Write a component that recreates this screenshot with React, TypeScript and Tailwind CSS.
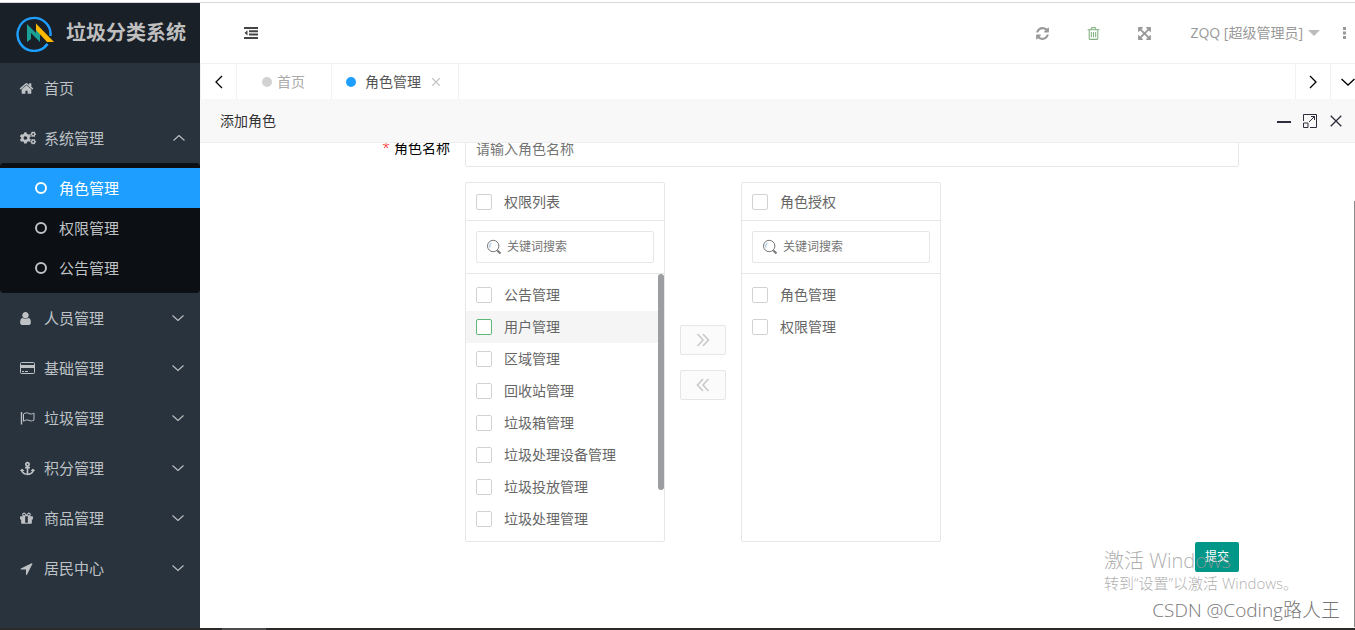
import type { ReactNode } from 'react';
import { FaAnchor, FaCogs } from 'react-icons/fa';

const faPaths = {
  home: 'M1472 992v480q0 26-19 45t-45 19h-384v-384h-256v384h-384q-26 0-45-19t-19-45v-480q0-1 .5-3t.5-3l575-474 575 474q1 2 1 6zm223-69l-62 74q-8 9-21 11h-3q-13 0-21-7l-692-577-692 577q-12 8-24 7-13-2-21-11l-62-74q-8-10-7-23.5t11-21.5l719-599q32-26 76-26t76 26l244 204v-195q0-14 9-23t23-9h192q14 0 23 9t9 23v408l219 182q10 8 11 21.5t-7 23.5z',
  user: 'M1536 1399q0 109-62.5 187t-150.5 78h-854q-88 0-150.5-78t-62.5-187q0-85 8.5-160.5t31.5-152 58.5-131 94-89 134.5-34.5q131 128 313 128t313-128q76 0 134.5 34.5t94 89 58.5 131 31.5 152 8.5 160.5zm-256-887q0 159-112.5 271.5t-271.5 112.5-271.5-112.5-112.5-271.5 112.5-271.5 271.5-112.5 271.5 112.5 112.5 271.5z',
  gift: 'M1056 1356v-716h-320v716q0 25 18 38.5t46 13.5h192q28 0 46-13.5t18-38.5zm-456-844h195l-126-161q-26-31-69-31-40 0-68 28t-28 68 28 68 68 28zm688-96q0-40-28-68t-68-28q-43 0-69 31l-125 161h194q40 0 68-28t28-68zm376 256v320q0 14-9 23t-23 9h-96v416q0 40-28 68t-68 28h-1088q-40 0-68-28t-28-68v-416h-96q-14 0-23-9t-9-23v-320q0-14 9-23t23-9h440q-93 0-158.5-65.5t-65.5-158.5 65.5-158.5 158.5-65.5q107 0 168 77l128 165 128-165q61-77 168-77 93 0 158.5 65.5t65.5 158.5-65.5 158.5-158.5 65.5h440q14 0 23 9t9 23z',
  arrow: 'M1593 349l-640 1280q-17 35-57 35-5 0-15-2-22-5-35.5-22.5t-13.5-39.5v-576h-576q-22 0-39.5-13.5t-22.5-35.5 4-42 29-30l1280-640q13-7 29-7 27 0 45 19 15 14 18.5 34.5t-6.5 39.5z',
  refresh: 'M1639 1056q0 5-1 7-64 268-268 434.5t-478 166.5q-146 0-282.5-55t-243.5-157l-129 129q-19 19-45 19t-45-19-19-45v-448q0-26 19-45t45-19h448q26 0 45 19t19 45-19 45l-137 137q71 66 161 102t187 36q134 0 250-65t186-179q11-17 53-117 8-23 30-23h192q13 0 22.5 9.5t9.5 22.5zm25-800v448q0 26-19 45t-45 19h-448q-26 0-45-19t-19-45 19-45l138-138q-148-137-349-137-134 0-250 65t-186 179q-11 17-53 117-8 23-30 23h-199q-13 0-22.5-9.5t-9.5-22.5v-7q65-268 270-434.5t480-166.5q146 0 284 55.5t245 156.5l130-129q19-19 45-19t45 19 19 45z',
  trash: 'M704 736v576q0 14-9 23t-23 9h-64q-14 0-23-9t-9-23v-576q0-14 9-23t23-9h64q14 0 23 9t9 23zm256 0v576q0 14-9 23t-23 9h-64q-14 0-23-9t-9-23v-576q0-14 9-23t23-9h64q14 0 23 9t9 23zm256 0v576q0 14-9 23t-23 9h-64q-14 0-23-9t-9-23v-576q0-14 9-23t23-9h64q14 0 23 9t9 23zm128 724v-948h-896v948q0 22 7 40.5t14.5 27 10.5 8.5h832q3 0 10.5-8.5t14.5-27 7-40.5zm-672-1076h448l-48-117q-7-9-17-11h-317q-10 2-17 11zm928 32v64q0 14-9 23t-23 9h-96v948q0 83-47 143.5t-113 60.5h-832q-66 0-113-58.5t-47-141.5v-952h-96q-14 0-23-9t-9-23v-64q0-14 9-23t23-9h309l70-167q15-37 54-63t79-26h320q40 0 79 26t54 63l70 167h309q14 0 23 9t9 23z',
  expand: 'M1411 541l-355 355 355 355 144-144q29-31 70-14 39 17 39 59v448q0 26-19 45t-45 19h-448q-42 0-59-40-17-39 14-69l144-144-355-355-355 355 144 144q31 30 14 69-17 40-59 40h-448q-26 0-45-19t-19-45v-448q0-42 40-59 39-17 69 14l144 144 355-355-355-355-144 144q-19 19-45 19-12 0-24-5-40-17-40-59v-448q0-26 19-45t45-19h448q42 0 59 40 17 39-14 69l-144 144 355 355 355-355-144-144q-31-30-14-69 17-40 59-40h448q26 0 45 19t19 45v448q0 42-39 59-13 5-25 5-26 0-45-19z',
};

function Fa({ name, className = 'size-[15px]' }: { name: keyof typeof faPaths; className?: string }) {
  return (
    <svg viewBox="0 0 1792 1792" fill="currentColor" className={className}>
      <path d={faPaths[name]} />
    </svg>
  );
}

// Thin line icons share one wrapper
function Line({ d, className = 'size-4', weight = 1.3 }: { d: string; className?: string; weight?: number }) {
  return (
    <svg viewBox="0 0 16 16" fill="none" stroke="currentColor" strokeWidth={weight} className={className}>
      <path d={d} />
    </svg>
  );
}

const chevrons = {
  left: 'M11 2L5 8l6 6',
  right: 'M5 2l6 6-6 6',
  down: 'M1.5 5L8 11l6.5-6',
};

function CardIcon() {
  return (
    <svg viewBox="0 0 16 14" className="h-[14px] w-4" fill="none" stroke="currentColor">
      <rect x="0.500" y="1.500" width="14" height="11" rx="1" />
      <path d="M1 5.500h13" strokeWidth="3" />
      <path d="M2 10.500h2M5 10.500h3" />
    </svg>
  );
}

function FlagIcon() {
  return (
    <svg viewBox="0 0 16 14" className="h-[14px] w-4" fill="none" stroke="currentColor">
      <path d="M1.500 1v12.500" strokeWidth="1.400" />
      <path d="M3.500 3c2.500-1.700 4-1.300 5.500-.5s3 .6 5-.4v7c-2 1-3.500 1-5 .3s-3-.8-5.500.8z" />
    </svg>
  );
}

function Logo() {
  return (
    <svg viewBox="0 0 38 38" className="size-[38px]">
      <path d="M31.500 30A16.500 16.500 0 1 1 34.500 22" fill="none" stroke="#1e9fff" strokeWidth="2.400" />
      <path d="M28.500 33L31.500 30" fill="none" stroke="#1e9fff" strokeWidth="2.400" />
      <path d="M11 28V10l9 9V12l4 4v12l-9-9v6z" fill="#1aa094" />
      <path d="M20 9.500L38 28h-7L20 16z" fill="#ffb800" />
    </svg>
  );
}

const subMenu = ['角色管理', '权限管理', '公告管理'];

const menu: { label: string; icon: ReactNode }[] = [
  { label: '人员管理', icon: <Fa name="user" className="-ml-0.5 size-[15px]" /> },
  { label: '基础管理', icon: <CardIcon /> },
  { label: '垃圾管理', icon: <FlagIcon /> },
  { label: '积分管理', icon: <FaAnchor className="size-[15px]" /> },
  { label: '商品管理', icon: <Fa name="gift" className="-ml-px size-[15px]" /> },
  { label: '居民中心', icon: <Fa name="arrow" className="-ml-px size-[15px]" /> },
];

const permissions = [
  '公告管理',
  '用户管理',
  '区域管理',
  '回收站管理',
  '垃圾箱管理',
  '垃圾处理设备管理',
  '垃圾投放管理',
  '垃圾处理管理',
];

const granted = ['角色管理', '权限管理'];

function Sidebar() {
  return (
    <aside className="w-[200px] shrink-0 overflow-hidden bg-[#28333e] text-[15px] text-[#bfc2c5]">
      <div className="flex h-[60px] items-center gap-3 bg-[#192027] pl-4">
        <Logo />
        <h1 className="text-xl font-bold whitespace-nowrap text-[#bfbfbf]">垃圾分类系统</h1>
      </div>
      <nav>
        <a href="#home" className="flex h-[50px] items-center pl-5">
          <span className="w-6"><Fa name="home" className="-ml-px size-[15px]" /></span>
          首页
        </a>
        <a href="#system" className="flex h-[50px] items-center pr-[13px] pl-5">
          <span className="w-6"><FaCogs className="size-4" /></span>
          系统管理
          <Line d="M2.500 10.500L8 5.500l5.500 5" weight={1.1} className="ml-auto size-4" />
        </a>
        <div className="rounded-sm bg-[#0c0f13] py-[5px]">
          {subMenu.map((label, i) => (
            <a
              key={label}
              href="#sub"
              className={`flex h-10 items-center gap-3 pl-[35px] ${i === 0 ? 'bg-[#1e9fff] text-white' : ''}`}
            >
              <span className="size-3 rounded-full border-2 border-current" />
              {label}
            </a>
          ))}
        </div>
        {menu.map((item) => (
          <a key={item.label} href="#menu" className="flex h-[50px] items-center pr-[14px] pl-5">
            <span className="w-6">{item.icon}</span>
            {item.label}
            <Line d="M2.500 5.500L8 10.500l5.500-5" weight={1.1} className="ml-auto size-4" />
          </a>
        ))}
      </nav>
    </aside>
  );
}

function Header() {
  return (
    <header className="flex h-[60px] shrink-0 items-center pr-[5px] pl-11 text-[#999]">
      <button aria-label="收起菜单" className="text-[#444]">
        <svg viewBox="0 0 14 12" className="h-3 w-[14px]" fill="currentColor">
          <path d="M0 0h14v2H0zM5 3.300h9v2H5zM5 6.600h9v2H5zM0 10h14v2H0zM3.500 3.300v5.300L.5 6z" />
        </svg>
      </button>
      <div className="ml-auto flex items-center">
        <div className="flex gap-9 pr-[38px]">
          <button aria-label="刷新"><Fa name="refresh" /></button>
          <button aria-label="清理" className="text-[#84b184]"><Fa name="trash" /></button>
          <button aria-label="全屏"><Fa name="expand" /></button>
        </div>
        <button className="flex items-center gap-[5px] text-sm">
          ZQQ [超级管理员]
          <svg viewBox="0 0 12 6" className="h-[6px] w-3" fill="#bbb"><path d="M0 0h12L6 6z" /></svg>
        </button>
        <button aria-label="更多" className="ml-[18px] flex w-3 justify-center">
          <svg viewBox="0 0 3 12" className="h-3 w-[3px]" fill="currentColor">
            <path d="M0 0h3v3H0zM0 4.500h3v3H0zM0 9h3v3H0z" />
          </svg>
        </button>
      </div>
    </header>
  );
}

function Tabs() {
  return (
    <div className="flex h-9 shrink-0 border-t border-l border-[#f2f2f2] text-sm leading-[34px]">
      <button aria-label="向左" className="flex w-9 items-center justify-center border-r border-[#f2f2f2]">
        <Line d={chevrons.left} />
      </button>
      <a href="#home" className="flex w-[95px] items-center gap-[5px] border-r border-[#f2f2f2] pl-[25px] text-[#aaa]">
        <span className="size-[10px] rounded-full bg-[#d2d2d2]" />
        首页
      </a>
      <div className="flex w-[127px] items-center border-r border-[#f2f2f2] pl-[14px] text-[#555]">
        <span className="mr-[9px] size-[10px] rounded-full bg-[#1e9fff]" />
        <a href="#role">角色管理</a>
        <button aria-label="关闭标签" className="ml-[10px] text-[#c2c2c2]">
          <Line d="M2 2l12 12M14 2L2 14" weight={1.8} className="size-[10px]" />
        </button>
      </div>
      <button aria-label="向右" className="ml-auto flex w-9 items-center justify-center border-x border-[#f2f2f2]">
        <Line d={chevrons.right} />
      </button>
      <button aria-label="标签操作" className="flex w-6 items-center overflow-hidden pl-[9px]">
        <Line d={chevrons.down} className="size-4 shrink-0" />
      </button>
    </div>
  );
}

function CheckRow({ id, label, active = false }: { id: string; label: string; active?: boolean }) {
  return (
    <label htmlFor={id} className={`flex h-8 items-center gap-3 pl-[10px] ${active ? 'bg-[#f5f5f5]' : ''}`}>
      <input
        id={id}
        type="checkbox"
        className={`size-4 appearance-none rounded-[2px] border bg-white ${active ? 'border-[#5fb878]' : 'border-[#d2d2d2]'}`}
      />
      {label}
    </label>
  );
}

function TransferBox({ id, title, items, activeItem, scroll = false }: {
  id: string;
  title: string;
  items: string[];
  activeItem?: string;
  scroll?: boolean;
}) {
  return (
    <section className="flex h-[360px] w-[200px] flex-col rounded-[2px] border border-[#e6e6e6] text-sm text-[#666]">
      <div className="border-b border-[#e6e6e6] pt-[3px] pb-0.5">
        <CheckRow id={`${id}-all`} label={title} />
      </div>
      <div className="border-b border-[#e6e6e6] p-[10px]">
        <div className="flex h-8 items-center gap-[5px] rounded-[2px] border border-[#e6e6e6] pl-[9px]">
          <svg viewBox="0 0 16 16" className="size-4 shrink-0" fill="none" stroke="#777">
            <circle cx="7.200" cy="7" r="5.700" />
            <path d="M4 8.500A3.600 3.600 0 0 1 5.500 4" stroke="#8ab4d8" />
            <path d="M11.300 11.500l3.200 3" strokeWidth="2" />
          </svg>
          <input
            aria-label={`${title}搜索`}
            placeholder="关键词搜索"
            className="w-full min-w-0 text-xs outline-none placeholder:text-[#757575]"
          />
        </div>
      </div>
      <div className="flex min-h-0 flex-1 overflow-hidden">
        <div className="flex-1 py-[5px]">
          {items.map((item) => (
            <CheckRow key={item} id={`${id}-${item}`} label={item} active={item === activeItem} />
          ))}
        </div>
        {scroll && <div className="h-[216px] w-[6px] rounded-full bg-[#9c9da0]" />}
      </div>
    </section>
  );
}

function RoleForm() {
  return (
    <form className="-mt-[14px] min-w-0 flex-1 pr-[115px] text-sm">
      <div className="mb-[15px] flex items-center">
        <label htmlFor="roleName" className="w-[265px] shrink-0 pr-[15px] text-right text-black">
          <span className="mr-1 font-light text-[#f00]">*</span>
          角色名称
        </label>
        <input
          id="roleName"
          placeholder="请输入角色名称"
          className="h-[38px] min-w-0 flex-1 rounded-[2px] border border-[#e6e6e6] pl-[10px] outline-none placeholder:text-[#757575]"
        />
      </div>
      <div className="flex items-center gap-[15px] pl-[265px]">
        <TransferBox id="all" title="权限列表" items={permissions} activeItem="用户管理" scroll />
        <div className="flex flex-col gap-[15px] text-[#c9c9c9]">
          <button type="button" disabled aria-label="授权" className="flex h-[30px] w-[46px] items-center justify-center rounded-[2px] border border-[#e6e6e6] bg-[#fbfbfb]">
            <Line d="M2.500 2L8 8l-5.500 6M8 2l5.500 6L8 14" weight={1.6} />
          </button>
          <button type="button" disabled aria-label="取消授权" className="flex h-[30px] w-[46px] items-center justify-center rounded-[2px] border border-[#e6e6e6] bg-[#fbfbfb]">
            <Line d="M8 2L2.500 8 8 14M13.500 2L8 8l5.500 6" weight={1.6} />
          </button>
        </div>
        <TransferBox id="granted" title="角色授权" items={granted} />
      </div>
      <div className="flex justify-end">
        <button type="submit" className="h-[30px] rounded-[2px] bg-[#009688] px-[10px] text-xs text-white">提交</button>
      </div>
    </form>
  );
}

function RoleDialog() {
  return (
    <section className="flex min-h-0 flex-1 flex-col">
      <div className="flex h-11 shrink-0 items-center border-b border-[#eee] bg-[#f8f8f8] pr-3 pl-5 text-[#2e2d3c]">
        <h2 className="text-sm text-[#333]">添加角色</h2>
        <div className="ml-auto flex items-center gap-3">
          <button aria-label="最小化" className="pt-0.5">
            <span className="block h-[2px] w-[14px] bg-[#2e2d3c]" />
          </button>
          <button aria-label="最大化">
            <svg viewBox="0 0 14 14" className="size-[14px]" fill="none" stroke="currentColor">
              <path d="M.5 7V.5h13v13H7M.5 9h4.500v4.500H.5zM6 8l5.500-5.500M8 2.500h3.500V6" />
            </svg>
          </button>
          <button aria-label="关闭">
            <Line d="M2 2l12 12M14 2L2 14" weight={1.6} className="size-[14px]" />
          </button>
        </div>
      </div>
      <div className="flex min-h-0 flex-1 overflow-hidden">
        <RoleForm />
        <div className="mt-[58px] mb-px w-px bg-[#8b8b8b]" />
      </div>
    </section>
  );
}

export default function App() {
  return (
    <div className="relative flex h-screen flex-col overflow-hidden bg-white font-['Open_Sans','Noto_Sans_CJK_SC',sans-serif]">
      <div className="h-[3px] shrink-0 border-b border-[#d8d8d8]" />
      <div className="flex min-h-0 flex-1">
        <Sidebar />
        <main className="flex min-w-0 flex-1 flex-col">
          <Header />
          <Tabs />
          <RoleDialog />
        </main>
      </div>
      <div className="h-[2px] shrink-0 bg-[#2b2a28] pl-[222px]">
        <div className="h-full w-11 bg-[#4d4d4d]" />
      </div>

      {/* desktop watermarks float over the page */}
      <div className="pointer-events-none absolute right-[54px] bottom-[37px] w-[197px] font-light whitespace-nowrap text-[#999]/80">
        <p className="text-xl leading-6">激活 Windows</p>
        <p className="text-[15px] leading-5">转到“设置”以激活 Windows。</p>
      </div>
      <p className="pointer-events-none absolute right-[15px] bottom-[6px] text-[19px] leading-7 font-light text-[#777]">
        CSDN @Coding路人王
      </p>
    </div>
  );
}
